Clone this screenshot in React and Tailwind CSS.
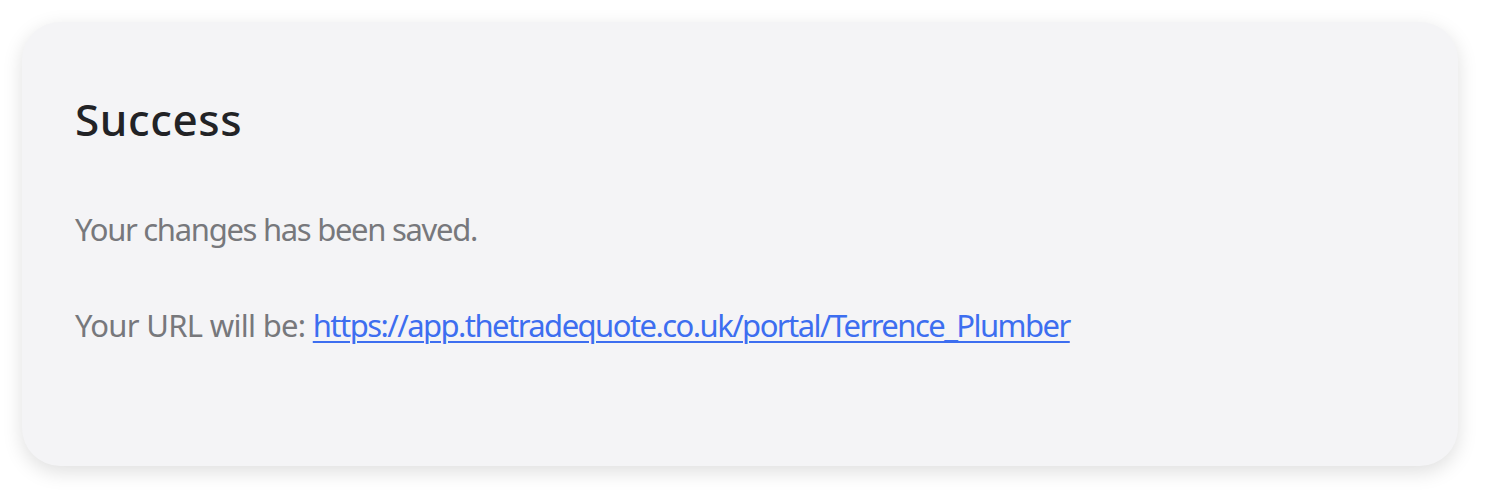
export default function App() {
  return (
    <div className="w-[1496px] h-[504px] bg-white p-[22px]" style={{ fontFamily: '"Noto Sans", sans-serif' }}>
      <div className="w-[1436px] h-[444px] rounded-[38px] bg-[#f4f4f6] shadow-[0_6px_20px_rgba(0,0,0,0.13)] pl-[53px] pt-[71px]">
        <h1 className="text-[44px] leading-[52px] font-medium text-[#222326] tracking-[0.6px]">Success</h1>
        <p className="mt-[64px] text-[31px] leading-[40px] text-[#77787c] tracking-[-1.3px]">Your changes has been saved.</p>
        <p className="mt-[56px] text-[31px] leading-[40px] text-[#77787c]">
          <span className="tracking-[-0.7px]">Your URL will be: </span>
          <a href="#" className="text-[#3d6ef0] underline underline-offset-4 decoration-2 tracking-[-1.55px]">
            https://app.thetradequote.co.uk/portal/Terrence_Plumber
          </a>
        </p>
      </div>
    </div>
  );
}
